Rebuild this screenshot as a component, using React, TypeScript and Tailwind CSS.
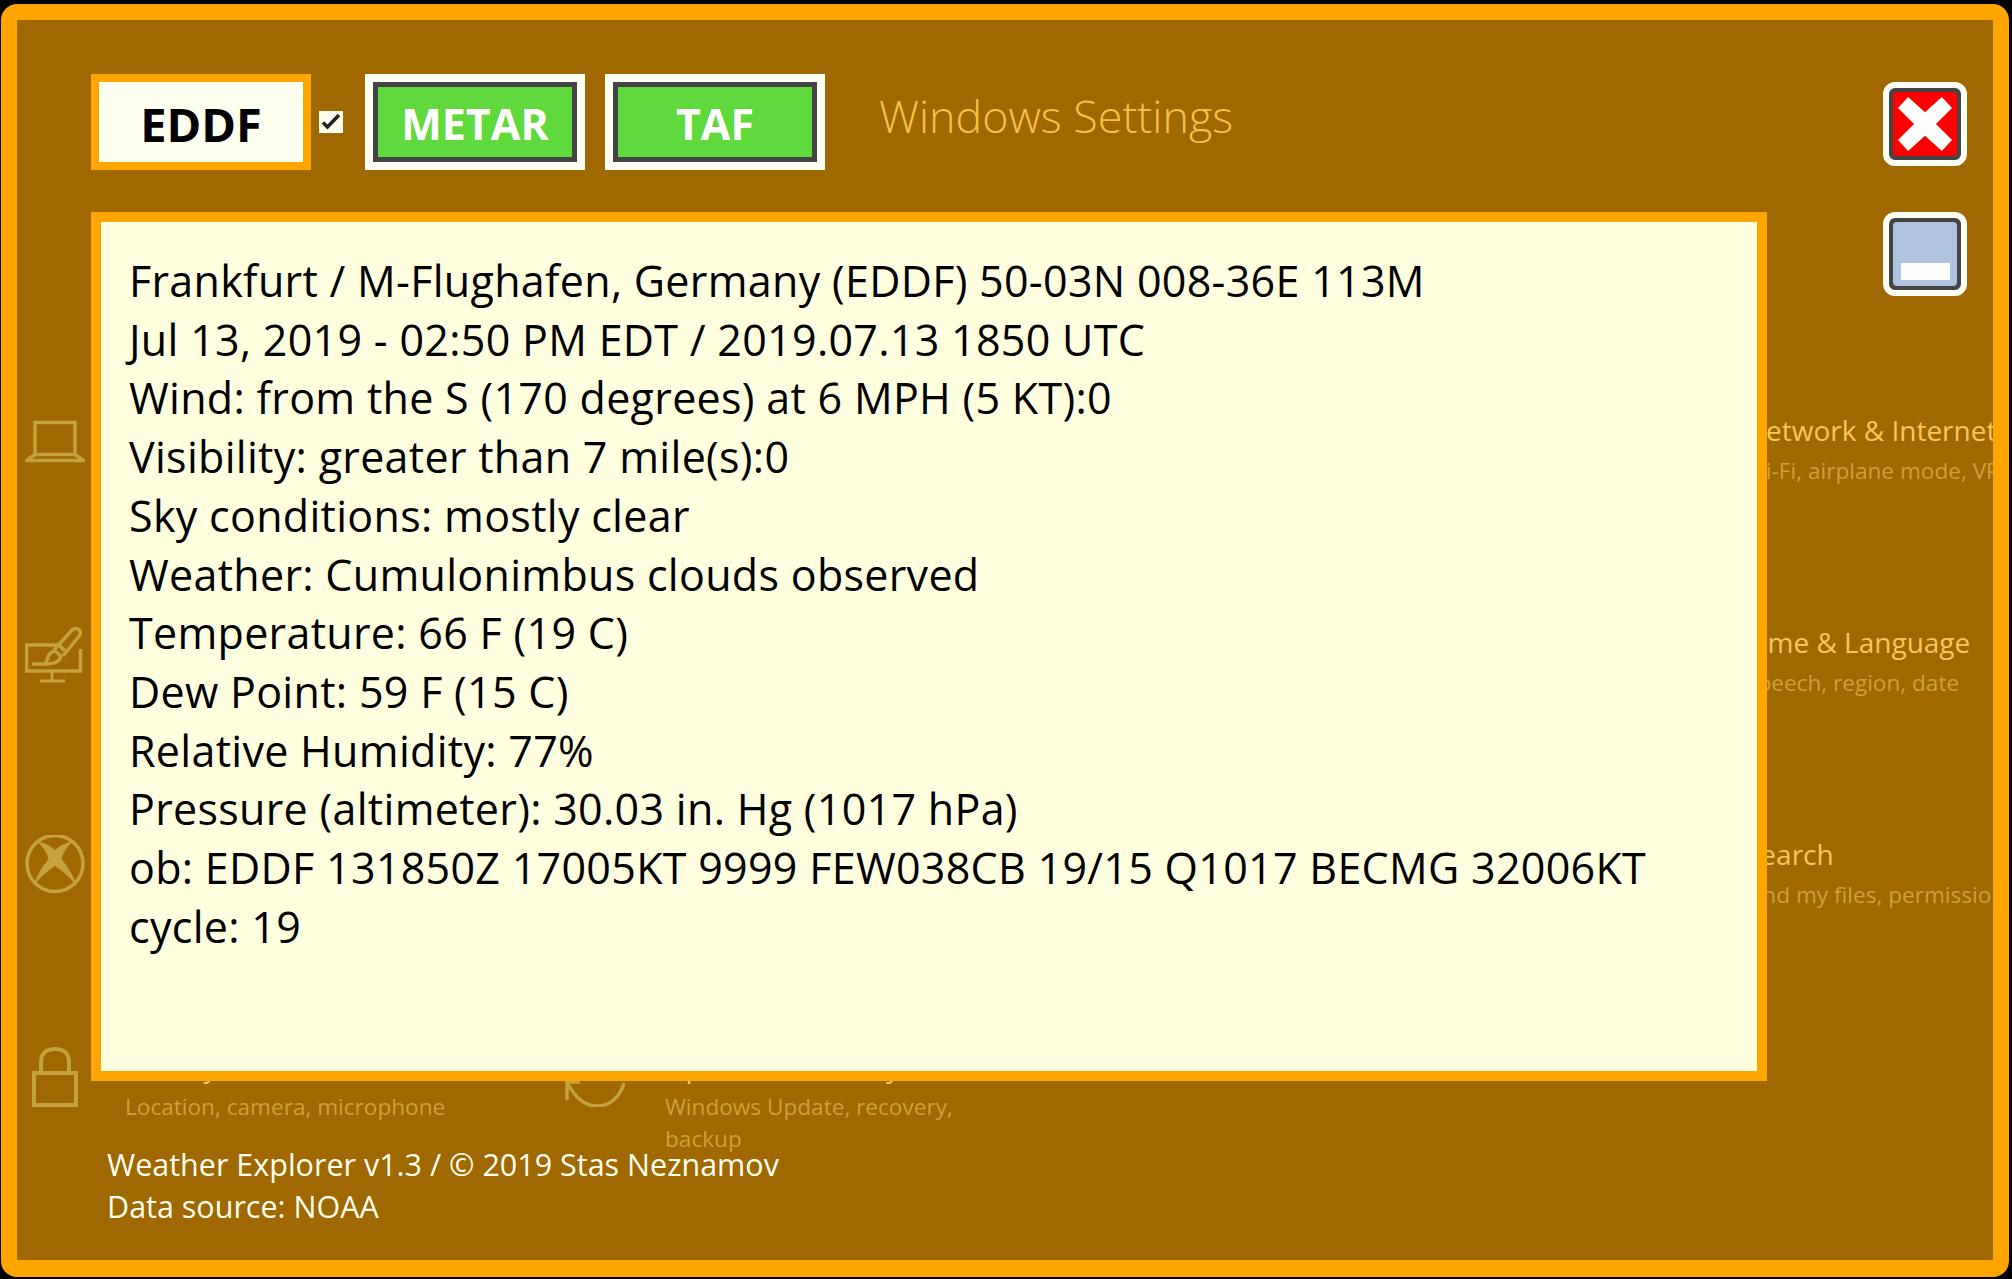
const lines = [
  "Frankfurt / M-Flughafen, Germany (EDDF) 50-03N 008-36E 113M",
  "Jul 13, 2019 - 02:50 PM EDT / 2019.07.13 1850 UTC",
  "Wind: from the S (170 degrees) at 6 MPH (5 KT):0",
  "Visibility: greater than 7 mile(s):0",
  "Sky conditions: mostly clear",
  "Weather: Cumulonimbus clouds observed",
  "Temperature: 66 F (19 C)",
  "Dew Point: 59 F (15 C)",
  "Relative Humidity: 77%",
  "Pressure (altimeter): 30.03 in. Hg (1017 hPa)",
  "ob: EDDF 131850Z 17005KT 9999 FEW038CB 19/15 Q1017 BECMG 32006KT",
  "cycle: 19",
];

const Laptop = () => (
  <svg viewBox="0 0 60 60" className="w-[60px] h-[60px] text-[#c4a23c]" fill="none" stroke="currentColor" strokeWidth="3.5">
    <path d="M10 11.5h40v32H10z" />
    <path d="M10 43.5 1.5 49.5h57L50 43.5" strokeLinejoin="round" />
  </svg>
);
const Brush = () => (
  <svg viewBox="0 0 60 60" className="w-[60px] h-[60px] text-[#c4a23c]" fill="none" stroke="currentColor" strokeWidth="3.5">
    <path d="M33 22H1.5v26h54V26" />
    <path d="M27 48v9M15 58h25" strokeWidth="3" />
    <path d="M7 41h13" />
    <path d="M20 41c3-3 2-12 10-13l6 5c-1 6-7 8-16 8Z" />
    <path d="M29 27 47 7c3-3 10-1 8 5L38 33" />
    <path d="M34 22l6 6" />
  </svg>
);
const Xbox = () => (
  <svg viewBox="0 0 60 60" className="w-[60px] h-[60px] text-[#c4a23c]">
    <circle cx="30" cy="28.5" r="28" fill="none" stroke="currentColor" strokeWidth="3.5" />
    <path fill="currentColor" d="M12 6Q24 9 30 15 36 9 48 6 38 16 36.5 24 46 35 52 51 42 39 30 31 18 39 8 51 14 35 23.5 24 22 16 12 6Z" />
  </svg>
);
const Lock = () => (
  <svg viewBox="0 0 60 60" className="w-[60px] h-[60px] text-[#c4a23c]" fill="none" stroke="currentColor" strokeWidth="4">
    <path d="M9 26h42v32H9z" />
    <path d="M16 26V15C16 6 22 2 30 2S44 6 44 15v11" />
  </svg>
);
const Update = () => (
  <svg viewBox="0 0 60 60" className="w-[60px] h-[60px] text-[#c4a23c]" fill="none" stroke="currentColor" strokeWidth="3.5">
    <path d="M59 36C55 50 45 59 32 59 20 59 10 50 3 37" />
    <path d="M2 53V35h13" />
  </svg>
);

type Item = { icon?: React.ReactNode; title?: string; sub?: string };
const items: Item[] = [
  { icon: <Laptop /> }, {}, {}, { title: "Network & Internet", sub: "Wi-Fi, airplane mode, VPN" },
  { icon: <Brush /> }, {}, {}, { title: "Time & Language", sub: "Speech, region, date" },
  { icon: <Xbox /> }, {}, {}, { title: "Search", sub: "Find my files, permissions" },
  { icon: <Lock />, title: "Privacy", sub: "Location, camera, microphone" },
  { icon: <Update />, title: "Update & Security", sub: "Windows Update, recovery, backup" },
  {}, {},
];

export default function App() {
  return (
    <div className="h-[1279px] w-[2012px] bg-black pt-[4px] pl-[1px] font-['Open_Sans','Liberation_Sans',sans-serif] overflow-hidden">
      <div className="relative w-[2008px] h-[1273px] rounded-[16px] border-x-[16px] border-t-[16px] border-b-[17px] border-[#ffa500] bg-[#9f6800] overflow-hidden">
        {/* settings page underneath */}
        <div className="pl-[8px] pt-[66px]">
          <h1 className="pl-[854px] text-[44.8px] leading-[60px] font-light text-[#f8c24a]">Windows Settings</h1>
          <div className="mt-[265px] grid grid-cols-[repeat(4,540px)] auto-rows-[212px]">
            {items.map((it, i) => (
              <div key={i} className="flex">
                <div className="w-[100px] shrink-0">{it.icon}</div>
                {it.title && (
                  <div className="w-[340px] shrink-0 -mt-[1px]">
                    <div className="text-[28px] leading-[40px] text-[#fbc658] whitespace-nowrap">{it.title}</div>
                    <div className="mt-[5px] text-[22.6px] leading-[32px] text-[#d0a03a]">{it.sub}</div>
                  </div>
                )}
              </div>
            ))}
          </div>
        </div>

        {/* weather app on top */}
        <div className="absolute inset-0 flex pl-[74px] pt-[54px]">
          <div className="w-[1676px] shrink-0">
            <div className="flex items-center h-[96px]">
              <div className="w-[220px] h-[96px] border-[8px] border-[#ffa500] bg-[#fffff0] flex items-center justify-center pt-[5px] text-[47px] font-bold text-black">EDDF</div>
              <div className="ml-[8px] w-[24px] h-[22px] bg-[#fffff0] flex items-center justify-center">
                <svg viewBox="0 0 24 22" className="w-[24px] h-[22px]" fill="none" stroke="#222" strokeWidth="3.5">
                  <path d="M4 11.5l4.5 4.5L20 4" />
                </svg>
              </div>
              <Btn className="ml-[22px]">METAR</Btn>
              <Btn className="ml-[20px]">TAF</Btn>
            </div>
            <div className="mt-[42px] h-[869px] border-[10px] border-[#ffa500] bg-[#ffffe0] pl-[28px] pt-[30px] text-[43px] tracking-[0.3px] leading-[58.7px] text-black">
              {lines.map((l) => (
                <div key={l} className="whitespace-nowrap">{l}</div>
              ))}
            </div>
            <div className="mt-[62px] pl-[16px] text-[30.5px] leading-[42px] text-[#fffff0]">
              <div>Weather Explorer v1.3 / © 2019 Stas Neznamov</div>
              <div>Data source: NOAA</div>
            </div>
          </div>
          <div className="ml-[116px] pt-[8px] flex flex-col gap-[46px]">
            <div className="w-[84px] h-[84px] rounded-[12px] border-[6px] border-[#fffff4] bg-[#444] p-[4px]">
              <div className="w-full h-full rounded-[4px] bg-[#ff0000] flex items-center justify-center">
                <svg viewBox="0 0 64 64" className="w-[54px] h-[54px]">
                  <path fill="#fff" d="M12 0 32 18 52 0 64 13 45 32 64 51 52 64 32 46 12 64 0 51 19 32 0 13Z" />
                </svg>
              </div>
            </div>
            <div className="w-[84px] h-[84px] rounded-[12px] border-[6px] border-[#fffff4] bg-[#444] p-[4px]">
              <div className="w-full h-full rounded-[4px] bg-[#adc3df] flex flex-col justify-end items-center pb-[6px]">
                <div className="w-[49px] h-[17px] bg-white" />
              </div>
            </div>
          </div>
        </div>
      </div>
    </div>
  );
}

function Btn({ children, className }: { children: React.ReactNode; className: string }) {
  return (
    <div className={"w-[220px] h-[96px] border-[8px] border-[#fffff4] bg-[#444] p-[5px] " + className}>
      <div className="w-full h-full bg-[#5fd93c] flex items-center justify-center pt-[4px] text-[43px] font-bold text-white">{children}</div>
    </div>
  );
}
